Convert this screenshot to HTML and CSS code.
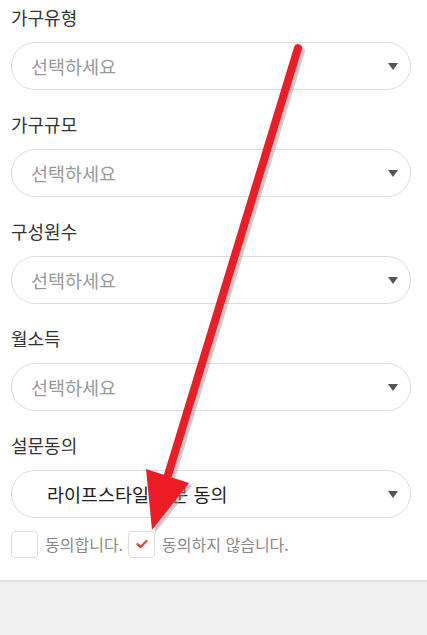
FILE: index.html
```html
<!DOCTYPE html>
<html lang="ko">
<head>
    <meta charset="UTF-8">
    <meta name="viewport" content="width=device-width, initial-scale=1.0">
    <title>설문</title>
    <link rel="stylesheet" href="styles.css">
</head>
<body>

<div class="survey">
    <div class="form-group">
        <label class="field-label">가구유형</label>
        <div class="select-box"><span class="placeholder">선택하세요</span><span class="caret"></span></div>
    </div>
    <div class="form-group">
        <label class="field-label">가구규모</label>
        <div class="select-box"><span class="placeholder">선택하세요</span><span class="caret"></span></div>
    </div>
    <div class="form-group">
        <label class="field-label">구성원수</label>
        <div class="select-box"><span class="placeholder">선택하세요</span><span class="caret"></span></div>
    </div>
    <div class="form-group">
        <label class="field-label">월소득</label>
        <div class="select-box"><span class="placeholder">선택하세요</span><span class="caret"></span></div>
    </div>
    <div class="form-group last">
        <label class="field-label">설문동의</label>
        <div class="select-box"><span class="value">라이프스타일 설문 동의</span><span class="caret"></span></div>
        <div class="agree-row">
            <span class="check"></span>
            <span class="check-text">동의합니다.</span>
            <span class="check checked">
                <svg width="14" height="14" viewBox="0 0 14 14"><path d="M2.5 7.2 L5.6 10 L11.5 4" fill="none" stroke="#e8453c" stroke-width="2.4" stroke-linecap="round" stroke-linejoin="round"/></svg>
            </span>
            <span class="check-text">동의하지 않습니다.</span>
        </div>
    </div>
</div>

<div class="footer"></div>

<!-- annotation arrow -->
<svg class="arrow" width="427" height="635" viewBox="0 0 427 635">
    <g transform="translate(3 3)" fill="#9a9a9a" stroke="#9a9a9a" opacity="0.5">
        <line x1="298" y1="48" x2="168" y2="475" stroke-width="8" stroke-linecap="round"/>
        <polygon points="146,469 189,483 152,530" stroke="none"/>
    </g>
    <line x1="298" y1="48" x2="168" y2="475" stroke="#ee1d25" stroke-width="8" stroke-linecap="round"/>
    <polygon points="146,469 189,483 152,530" fill="#ee1d25"/>
</svg>

</body>
</html>
```

FILE: styles.css
```css
body {
    margin: 0;
    font-family: "Noto Sans CJK KR", "Noto Sans", sans-serif;
    background-color: white;
    height: 635px;
    display: flex;
    flex-direction: column;
    overflow: hidden;
}
.survey {
    padding: 5px 16px 0 11px;
}
.form-group {
    margin-bottom: 22px;
}
.field-label {
    display: block;
    height: 24px;
    line-height: 24px;
    margin-bottom: 13px;
    font-size: 18px;
    color: #333;
}
.select-box {
    height: 48px;
    border: 1px solid #dcdcdc;
    border-radius: 24px;
    box-sizing: border-box;
    display: flex;
    align-items: center;
    justify-content: space-between;
    padding: 0 12px 0 19px;
}
.placeholder {
    font-size: 18.5px;
    color: #999;
}
.value {
    font-size: 18.5px;
    color: #222;
    padding-left: 16px;
}
.caret {
    width: 0;
    height: 0;
    border-left: 5.5px solid transparent;
    border-right: 5.5px solid transparent;
    border-top: 7px solid #555;
}
.agree-row {
    display: flex;
    align-items: center;
    margin-top: 12px;
    height: 28px;
}
.check {
    width: 27px;
    height: 27px;
    border: 1px solid #ddd;
    border-radius: 4px;
    box-sizing: border-box;
    display: flex;
    align-items: center;
    justify-content: center;
}
.check-text {
    font-size: 16px;
    color: #888;
    margin: 0 5px 0 7px;
}
.footer {
    flex: 1;
    background-color: #f0f0f0;
    border-top: 2px solid #e2e2e2;
}
.arrow {
    position: absolute;
    top: 0;
    left: 0;
    pointer-events: none;
}
```
